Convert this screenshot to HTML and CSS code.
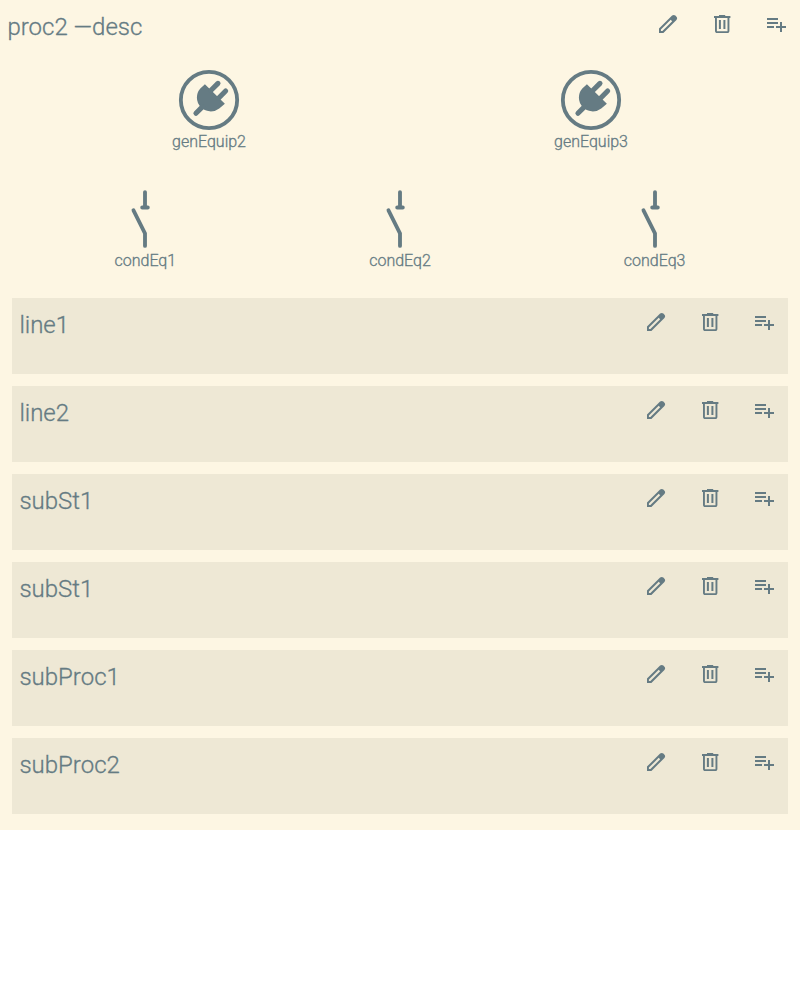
FILE: index.html
```html
<!DOCTYPE html>
<html lang="en">
<head>
<meta charset="utf-8">
<title>Process editor</title>
<link rel="stylesheet" href="styles.css">
</head>
<body>
<svg class="defs" width="0" height="0">
  <symbol id="edit" viewBox="0 0 24 24"><path fill-rule="evenodd" d="M4.9 19.1h1.5L16.2 9.3 14.7 7.8 4.9 17.6zM3 21v-4.4L16.1 3.6q.75-.7 1.65-.7t1.6.7l1.1 1.1q.7.7.7 1.6t-.7 1.6L7.4 21z"/></symbol>
  <symbol id="delete" viewBox="0 0 24 24"><path fill-rule="evenodd" d="M7 21q-.83 0-1.41-.59T5 19V6H4V4h5V3h6.2v1h5.2v2h-1v13q0 .83-.59 1.41T17.4 21zM17.5 6H6.9v13.2h10.6zM8.9 17.1h2V8h-2zm4.5 0h2V8h-2z"/></symbol>
  <symbol id="add" viewBox="0 0 24 24"><path d="M14 10H3v2h11v-2zm0-4H3v2h11V6zm4 8v-4h-2v4h-4v2h4v4h2v-4h4v-2h-4zM3 16h7v-2H3v2z"/></symbol>
  <symbol id="plug" viewBox="0 0 25 25"><circle cx="12.5" cy="12.5" r="11" fill="none" stroke="currentColor" stroke-width="1.5"/><path d="M10.9 6.3L9.1 8A5.4 5.4 0 0 0 16.5 15.8L18.7 14z"/><path d="M13.2 8.8L16 6M16.2 11.8L19 9M10 15.1L7.4 17.7" fill="none" stroke="currentColor" stroke-width="2" stroke-linecap="round"/></symbol>
  <symbol id="switch" viewBox="0 0 25 25"><path d="M12.5 2v6M11.4 8h2.2M8 9.1l4.5 9v4.9" fill="none" stroke="currentColor" stroke-width="1.5" stroke-linecap="round"/></symbol>
</svg>
<main class="process">
  <header class="bar"><h1 class="title">proc2 —desc</h1><nav class="actions"><svg><use href="#edit"/></svg><svg><use href="#delete"/></svg><svg><use href="#add"/></svg></nav></header>
  <div class="equipment general">
    <div class="item"><svg><use href="#plug"/></svg><span>genEquip2</span></div>
    <div class="item"><svg><use href="#plug"/></svg><span>genEquip3</span></div>
  </div>
  <div class="equipment conducting">
    <div class="item"><svg><use href="#switch"/></svg><span>condEq1</span></div>
    <div class="item"><svg><use href="#switch"/></svg><span>condEq2</span></div>
    <div class="item"><svg><use href="#switch"/></svg><span>condEq3</span></div>
  </div>
  <div class="children">
    <section class="card"><div class="bar"><h2 class="title">line1</h2><nav class="actions"><svg><use href="#edit"/></svg><svg><use href="#delete"/></svg><svg><use href="#add"/></svg></nav></div></section>
    <section class="card"><div class="bar"><h2 class="title">line2</h2><nav class="actions"><svg><use href="#edit"/></svg><svg><use href="#delete"/></svg><svg><use href="#add"/></svg></nav></div></section>
    <section class="card"><div class="bar"><h2 class="title">subSt1</h2><nav class="actions"><svg><use href="#edit"/></svg><svg><use href="#delete"/></svg><svg><use href="#add"/></svg></nav></div></section>
    <section class="card"><div class="bar"><h2 class="title">subSt1</h2><nav class="actions"><svg><use href="#edit"/></svg><svg><use href="#delete"/></svg><svg><use href="#add"/></svg></nav></div></section>
    <section class="card"><div class="bar"><h2 class="title">subProc1</h2><nav class="actions"><svg><use href="#edit"/></svg><svg><use href="#delete"/></svg><svg><use href="#add"/></svg></nav></div></section>
    <section class="card"><div class="bar"><h2 class="title">subProc2</h2><nav class="actions"><svg><use href="#edit"/></svg><svg><use href="#delete"/></svg><svg><use href="#add"/></svg></nav></div></section>
  </div>
</main>
</body>
</html>
```

FILE: styles.css
```css
* { box-sizing: border-box; }
body { margin: 0; background: #fff; font-family: Roboto, sans-serif; }
.defs { display: block; position: absolute; }
.process { height: 830px; background: #fdf6e3; color: #657b83; font-weight: 300; -webkit-text-stroke: 0.3px currentColor; }
svg { fill: currentColor; }
.bar { display: flex; justify-content: space-between; height: 48px; padding-left: 7.4px; }
.title { margin: 0; padding-top: 4px; font-size: 24px; font-weight: 300; line-height: 46px; }
.actions { display: flex; gap: 6px; }
.actions svg { width: 48px; height: 48px; padding: 12px; }
.equipment { display: grid; column-gap: 12px; }
.general { grid-template-columns: repeat(2, 1fr); padding: 20px 24px 0; height: 120px; }
.conducting { grid-template-columns: repeat(3, 1fr); padding: 19px 24px 0; height: 130px; }
.item { display: flex; flex-direction: column; align-items: center; }
.item svg { width: 64px; height: 64px; }
.item span { font-size: 16px; line-height: 19px; }
.children { display: grid; gap: 12px; padding: 0 12px; }
.card { height: 76px; background: #eee8d5; }
```
